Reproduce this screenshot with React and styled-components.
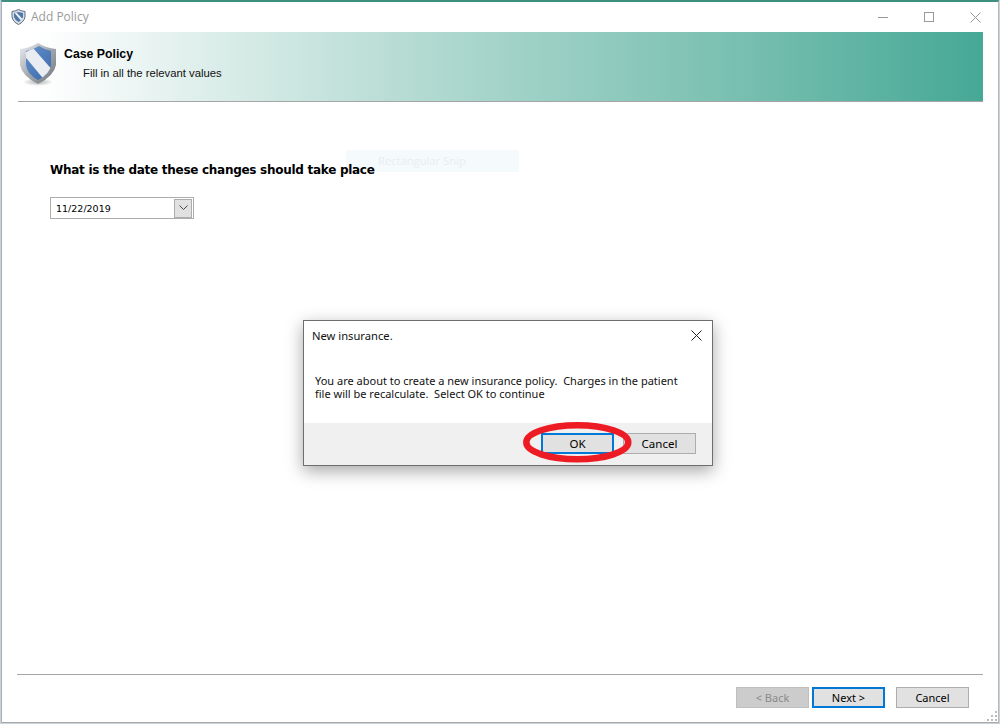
import React from "react";
import styled, { createGlobalStyle } from "styled-components";

const Global = createGlobalStyle`
  html, body { margin: 0; padding: 0; background: #fff; }
  body { width: 1000px; height: 724px; overflow: hidden; font-family: "Liberation Sans", Arial, sans-serif; }
`;

const Desktop = styled.div`
  width: 1000px; height: 724px; background: #c9d3dc; position: relative; overflow: hidden;
  display: flex; padding: 0 1px 1px 1px; box-sizing: border-box;
`;
const Win = styled.div`
  flex: 1; display: flex; flex-direction: column; background: #fff;
  border-top: 2px solid #3d8f7f; border-left: 1px solid #a9afb8; border-bottom: 1px solid #a8a8a8; border-right: 1px solid #b8b8b8;
  position: relative; min-width: 0;
`;
const TitleBar = styled.div`
  height: 30px; display: flex; align-items: center; padding-left: 9px; flex: none;
`;
const TitleText = styled.span`
  font: 12px "Open Sans", sans-serif; color: #9a9a9a; margin: -2px 0 0 5px;
`;
const WinCtrls = styled.div`
  margin-left: auto; display: flex;
`;
const WinBtn = styled.div`
  width: 46px; height: 30px; display: flex; align-items: center; justify-content: center;
`;
const Banner = styled.div`
  height: 70px; margin: 0 15px 0 16px; flex: none; box-sizing: border-box;
  border-bottom: 1px solid #a5a5a5;
  background: linear-gradient(90deg, #ffffff 0%, #fdfefe 3%, #d3e9e4 25%, #a3d3c9 50%, #78bfb0 75%, #46a896 100%);
  display: flex;
`;
const ShieldBox = styled.div`
  width: 46px; flex: none; padding-top: 10px; padding-left: 1px; box-sizing: border-box;
`;
const BannerText = styled.div`
  padding-top: 14px; display: flex; flex-direction: column;
`;
const BannerTitle = styled.div`
  font: bold 12.3px/16px "Liberation Sans", sans-serif; color: #000;
`;
const BannerSub = styled.div`
  font: 11.3px/14px "Liberation Sans", sans-serif; color: #111; margin: 4px 0 0 19px;
`;
const Content = styled.div`
  flex: 1; padding: 60px 0 0 48px;
`;
const Question = styled.div`
  font: bold 12px/16px "DejaVu Sans", sans-serif; color: #000; letter-spacing: -0.28px;
  position: relative; z-index: 1;
`;
const DateBox = styled.div`
  margin-top: 19px; width: 144px; height: 22px; box-sizing: border-box; border: 1px solid #adadad;
  display: flex; align-items: center; justify-content: space-between; padding: 0 1px 0 5px;
  font: 9.5px "DejaVu Sans", sans-serif; color: #000;
`;
const DropBtn = styled.div`
  width: 16px; height: 17px; background: #e1e1e1; border: 1px solid #adadad; display: flex; align-items: center; justify-content: center;
`;
const Footer = styled.div`
  margin: 0 15px 0 15px; flex: none; height: 48px; border-top: 1px solid #a5a5a5;
  display: flex; justify-content: flex-end; align-items: flex-start; padding: 12px 14px 0 0; box-sizing: border-box;
`;
const WizBtn = styled.div`
  width: 73px; height: 21px; box-sizing: border-box; display: flex; align-items: center; justify-content: center;
  font: 11px "Noto Sans", sans-serif; margin-left: ${p => p.gap || 0}px;
  background: ${p => p.disabled ? "#cccccc" : "#e1e1e1"};
  color: ${p => p.disabled ? "#8a8a8a" : "#000"};
  border: ${p => p.focus ? "2px solid #0078d7" : `1px solid ${p.disabled ? "#bfbfbf" : "#adadad"}`};
`;
const DialogBtn = styled(WizBtn)`
  font-size: 11.5px;
`;
const Snip = styled.div`
  position: absolute; left: 344px; top: 148px; width: 173px; height: 22px; background: #f5fafd;
  color: #e8eef2; font: 11.2px/22px "Open Sans", sans-serif; padding-left: 32px; box-sizing: border-box;
`;
const Dialog = styled.div`
  position: absolute; left: 301px; top: 318px; width: 410px; height: 146px; box-sizing: border-box; z-index: 2;
  background: #fff; border: 1px solid #6e6e6e; box-shadow: 0 5px 16px rgba(0,0,0,.35);
  display: flex; flex-direction: column;
`;
const DialogHead = styled.div`
  display: flex; justify-content: space-between; padding: 7px 10px 0 8px; height: 32px; box-sizing: border-box;
  font: 11.2px/16px "Noto Sans", sans-serif; color: #111;
`;
const DialogX = styled.svg`
  margin-top: 2px;
`;
const DialogBody = styled.div`
  flex: none; height: 70px; box-sizing: border-box; padding: 21px 10px 0 11px;
  font: 11px/13px "Noto Sans", sans-serif; color: #111; white-space: pre;
`;
const DialogFoot = styled.div`
  flex: 1; background: #f0f0f0; display: flex; justify-content: flex-end; padding: 10px 16px 0 0; gap: 9px; position: relative;
`;
const Ring = styled.svg`
  position: absolute; left: 218px; top: -3px; overflow: visible; pointer-events: none;
`;
const Grip = styled.svg`
  position: absolute; right: 0; bottom: 0;
`;

const Shield = () => (
  <svg width="38" height="44" viewBox="0 0 38 44">
    <defs>
      <linearGradient id="rim" x1="0" y1="0" x2="1" y2="1">
        <stop offset="0" stopColor="#eceef1" /><stop offset=".5" stopColor="#a4a9b0" /><stop offset="1" stopColor="#6f747c" />
      </linearGradient>
      <linearGradient id="blue" x1="0" y1="0" x2="1" y2="1">
        <stop offset="0" stopColor="#6f9bd0" /><stop offset="1" stopColor="#2f5ea6" />
      </linearGradient>
      <clipPath id="inner"><path d="M7 9 Q14 8 20 4 Q26 8 32 9 L32 23 Q31 32 19 38 Q8 32 7 23Z" /></clipPath>
      <radialGradient id="shade"><stop offset="0" stopColor="#000" stopOpacity=".3" /><stop offset="1" stopColor="#000" stopOpacity="0" /></radialGradient>
    </defs>
    <ellipse cx="19" cy="40" rx="15" ry="4" fill="url(#shade)" />
    <path d="M19 1 Q27 6 37 7 L37 23 Q35 34 19 42 Q3 34 1 23 L1 7 Q11 6 19 1Z" fill="url(#rim)" />
    <g clipPath="url(#inner)">
      <rect width="38" height="44" fill="url(#blue)" />
      <path d="M4 12 L14 6 L36 31 L27 40Z" fill="#e9edf2" />
    </g>
  </svg>
);
const MiniShield = () => (
  <svg width="15" height="16" viewBox="0 0 15 16">
    <path d="M7.5 .5 Q10 2 14 2.5 L14 8 Q13 13 7.5 15.5 Q2 13 1 8 L1 2.5 Q5 2 7.5 .5Z" fill="#d8dde3" stroke="#5f6d80" />
    <path d="M3 4 L7.5 3 L12 4 L12 8 Q11 11 7.5 13 Q4 11 3 8Z" fill="#4f77ab" />
    <path d="M3.5 4 L5.5 3.5 L11.5 10 L10 11.5Z" fill="#eef1f5" />
  </svg>
);

export default function App() {
  return (
    <>
      <Global />
      <Desktop>
        <Win>
          <TitleBar>
            <MiniShield />
            <TitleText>Add Policy</TitleText>
            <WinCtrls>
              <WinBtn><svg width="10" height="10"><path d="M0 5.5H10" stroke="#999" /></svg></WinBtn>
              <WinBtn><svg width="10" height="10"><rect x=".5" y=".5" width="9" height="9" fill="none" stroke="#999" /></svg></WinBtn>
              <WinBtn><svg width="11" height="11"><path d="M.5 .5L10.5 10.5M10.5 .5L.5 10.5" stroke="#999" /></svg></WinBtn>
            </WinCtrls>
          </TitleBar>
          <Banner>
            <ShieldBox><Shield /></ShieldBox>
            <BannerText>
              <BannerTitle>Case Policy</BannerTitle>
              <BannerSub>Fill in all the relevant values</BannerSub>
            </BannerText>
          </Banner>
          <Content>
            <Question>What is the date these changes should take place</Question>
            <DateBox>
              <span>11/22/2019</span>
              <DropBtn><svg width="9" height="6"><path d="M.5 .5L4.5 4.5L8.5 .5" fill="none" stroke="#444" /></svg></DropBtn>
            </DateBox>
          </Content>
          <Footer>
            <WizBtn disabled>&lt; Back</WizBtn>
            <WizBtn focus gap={3}>Next &gt;</WizBtn>
            <WizBtn gap={11}>Cancel</WizBtn>
          </Footer>
          <Snip>Rectangular Snip</Snip>
          <Dialog>
            <DialogHead>
              <span>New insurance.</span>
              <DialogX width="11" height="11"><path d="M.5 .5L10.5 10.5M10.5 .5L.5 10.5" stroke="#222" /></DialogX>
            </DialogHead>
            <DialogBody>{"You are about to create a new insurance policy.  Charges in the patient\nfile will be recalculate.  Select OK to continue"}</DialogBody>
            <DialogFoot>
              <DialogBtn focus>OK</DialogBtn>
              <DialogBtn>Cancel</DialogBtn>
              <Ring width="110" height="44" viewBox="0 0 110 44">
                <ellipse cx="55.3" cy="22.3" rx="51" ry="17" fill="none" stroke="#ed1c24" strokeWidth="6.5" />
              </Ring>
            </DialogFoot>
          </Dialog>
          <Grip width="12" height="12"><g fill="#bbb"><rect x="9" y="1" width="2" height="2" /><rect x="5" y="5" width="2" height="2" /><rect x="9" y="5" width="2" height="2" /><rect x="1" y="9" width="2" height="2" /><rect x="5" y="9" width="2" height="2" /><rect x="9" y="9" width="2" height="2" /></g></Grip>
        </Win>
      </Desktop>
    </>
  );
}
